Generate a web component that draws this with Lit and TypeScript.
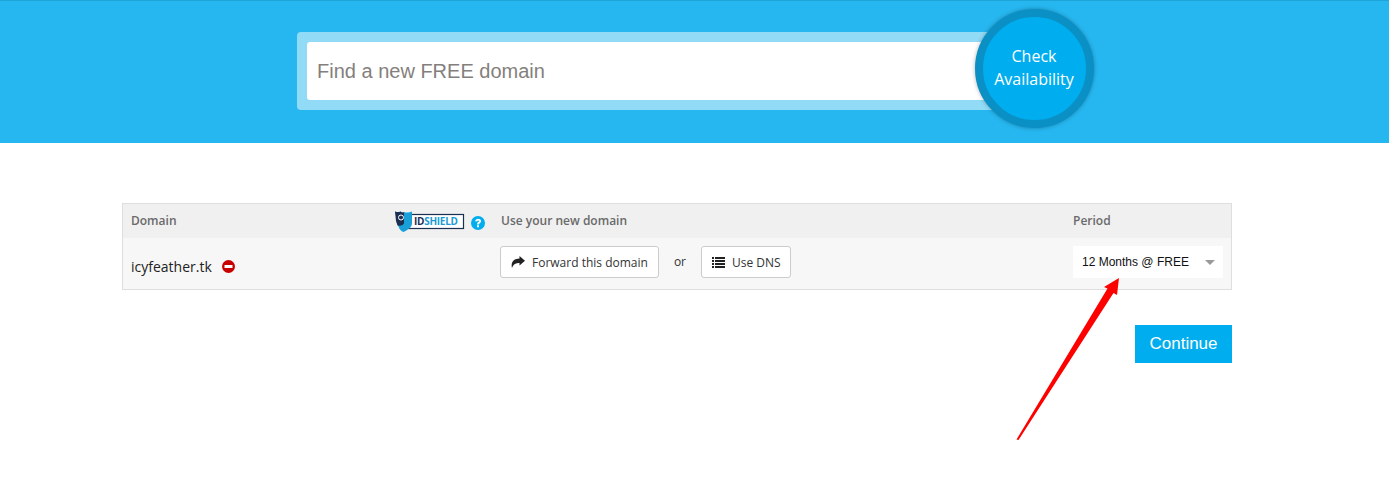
import { LitElement, html, css } from "lit";
import { customElement } from "lit/decorators.js";

@customElement("app-root")
export class AppRoot extends LitElement {
  static styles = css`
    :host { display: block; position: relative; height: 479px; overflow: hidden; background: #fff; font-family: "Open Sans", sans-serif; color: #222; }
    .hero { height: 143px; box-sizing: border-box; background: #26b7f0; border-top: 1px solid #1fa4d8; padding: 8px 0 0 297px; display: flex; align-items: flex-start; }
    .search { width: 728px; height: 78px; box-sizing: border-box; margin-top: 23px; padding: 10px; background: #92dbf7; border-radius: 4px; }
    .input { height: 58px; box-sizing: border-box; background: #fff; border-radius: 3px; padding-left: 10px; display: flex; align-items: center; font: 20px "Liberation Sans", sans-serif; color: #847f7d; }
    .check { width: 119px; height: 119px; box-sizing: border-box; margin-left: -50px; padding: 0 1px 1px 0; flex: none; border-radius: 50%; background: #00adee; border: 8.5px solid #0a90c5; box-shadow: 0 0 4px rgba(0,0,0,.3); color: #fff; display: flex; align-items: center; justify-content: center; text-align: center; font-size: 16px; line-height: 23px; }
    .table { margin: 60px 0 0 122px; width: 1110px; box-sizing: border-box; border: 1px solid #dedede; background: #f7f7f7; }
    .head, .row { display: grid; grid-template-columns: 264px 106px 572px 1fr; padding-left: 8px; align-items: center; }
    .head { height: 34px; box-sizing: border-box; padding-bottom: 2px; background: #f0f0f0; font-size: 12px; font-weight: 600; color: #6a6a6a; }
    .row { height: 51px; }
    .shield { display: flex; align-items: flex-start; gap: 6px; margin-top: 2px; }
    .help { margin-top: 6px; }
    .name { display: flex; align-items: center; gap: 10px; font-size: 14px; color: #222; padding-top: 6px; }
    .actions { display: flex; align-items: center; font-size: 12px; color: #333; padding-bottom: 4px; margin-left: -1px; }
    .btn { height: 32px; box-sizing: border-box; display: flex; align-items: center; gap: 7px; padding: 1px 10px 0; background: #fff; border: 1px solid #ccc; border-radius: 3px; color: #333; }
    .btn.dns { padding-right: 9px; }
    .or { margin: 0 15px; }
    .select { width: 150px; height: 32px; box-sizing: border-box; background: #fff; display: flex; align-items: center; justify-content: space-between; padding: 1px 8px 0 9px; font: 12px "Liberation Sans", sans-serif; color: #111; margin-bottom: 4px; }
    .caret { width: 0; height: 0; border: 5px solid transparent; border-top: 5px solid #999; border-bottom: 0; }
    .foot { margin: 35px 0 0 1135px; }
    .continue { width: 97px; height: 38px; background: #00adee; color: #fff; font: 17px "Liberation Sans", sans-serif; display: flex; align-items: center; justify-content: center; }
    .arrow { position: absolute; left: 1000px; top: 270px; }
    .logo-text { font: 700 10px "Open Sans", sans-serif; fill: #1b2f52; }
  `;

  render() {
    return html`
      <div class="hero">
        <div class="search"><div class="input">Find a new FREE domain</div></div>
        <div class="check">Check<br />Availability</div>
      </div>
      <div class="table">
        <div class="head">
          <div>Domain</div>
          <div class="shield">
            <svg width="70" height="22" viewBox="0 0 70 22">
              <rect x="13" y="4.500" width="55.500" height="14" fill="#fff" stroke="#1b2f52" stroke-width="1.200" />
              <path d="M0 1.500c2 .8 4 .8 5.500 0 1 .9 2.500 1.300 3.500.4 2 .7 5 .9 8-.4v12c0 3.500-4 6.500-8.500 8.500-2.500-1-4-2.500-5-5.500z" fill="#1aa0d8" />
              <path d="M0 1.500c2 .8 4 .8 5.500 0 1 .9 2.500 1.300 3.500.4v11.600c-1.500 2-3.500 2.500-6.500 2L1 11z" fill="#1b2f52" />
              <circle cx="6" cy="7.500" r="2.500" fill="none" stroke="#fff" stroke-width="1" />
              <text class="logo-text" x="19" y="15" textLength="44" lengthAdjust="spacing">ID<tspan fill="#1a9bd7">SHIELD</tspan></text>
            </svg>
            <svg class="help" width="14" height="14" viewBox="0 0 14 14">
              <circle cx="7" cy="7" r="7" fill="#00adee" />
              <path d="M4.200 5.300C4.300 3.600 5.500 2.700 7.200 2.700c1.700 0 2.900 1 2.900 2.400 0 1.100-.6 1.600-1.300 2.100-.6.400-.8.700-.8 1.300H6c0-1.100.3-1.700 1.100-2.300.5-.4.900-.6.900-1 0-.4-.3-.7-.8-.7-.6 0-.9.300-1 .9zM6 9.200h2v2H6z" fill="#fff" />
            </svg>
          </div>
          <div>Use your new domain</div>
          <div>Period</div>
        </div>
        <div class="row">
          <div class="name">
            <span>icyfeather.tk</span>
            <svg width="13" height="13" viewBox="0 0 13 13"><circle cx="6.500" cy="6.500" r="6.500" fill="#c70000" /><rect x="2.500" y="5" width="8" height="3" fill="#fff" /></svg>
          </div>
          <div></div>
          <div class="actions">
            <div class="btn">
              <svg width="14" height="12" viewBox="0 0 14 12"><path d="M8.500 0L14 4.800 8.500 9.600V7C5 7 2.500 7.800 1 12-.5 6 3 2.800 8.500 2.600z" fill="#222" /></svg>
              <span>Forward this domain</span>
            </div>
            <span class="or">or</span>
            <div class="btn dns">
              <svg width="13" height="11" viewBox="0 0 13 11"><path d="M0 0h2v2H0zM3 0h10v2H3zM0 3h2v2H0zM3 3h10v2H3zM0 6h2v2H0zM3 6h10v2H3zM0 9h2v2H0zM3 9h10v2H3z" fill="#222" /></svg>
              <span>Use DNS</span>
            </div>
          </div>
          <div class="select"><span>12 Months @ FREE</span><span class="caret"></span></div>
        </div>
      </div>
      <div class="foot"><div class="continue">Continue</div></div>
      <svg class="arrow" width="130" height="175" viewBox="0 0 130 175">
        <path d="M16.500 169.500L107.500 18.500 104 17 119 8 117 25 113.500 23 18.500 170z" fill="#f00" />
      </svg>
    `;
  }
}
